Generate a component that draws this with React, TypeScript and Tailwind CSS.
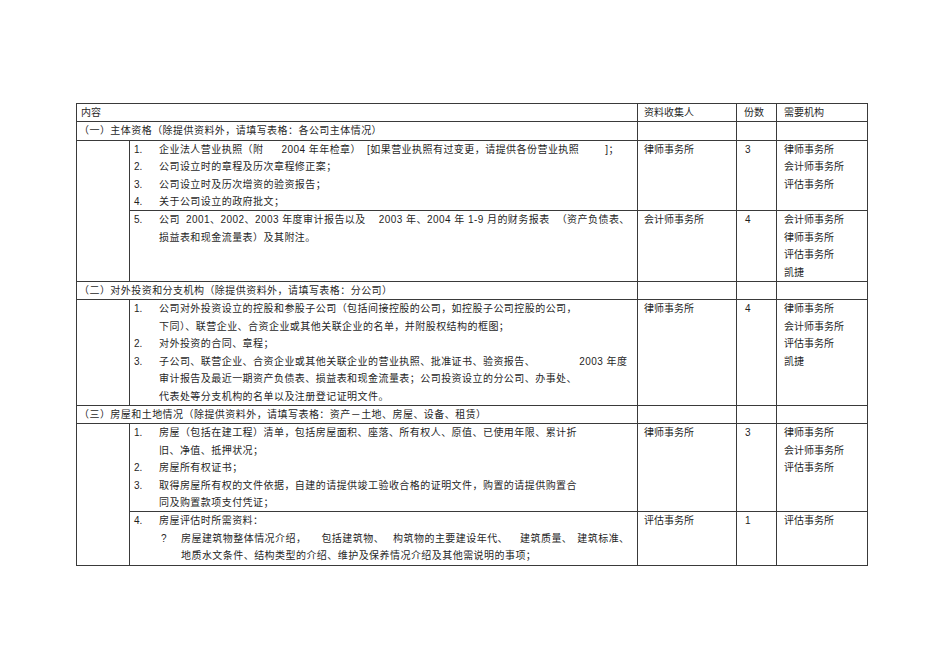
import type { ReactNode } from "react";

type Item = { no: string; lines: ReactNode[]; bullet?: { mark: string; lines: ReactNode[] } };
type Group = { items: Item[]; collector: string; count: string; orgs: string[] };
type Section = { title: string; groups: Group[] };

function Gap({ className }: { className: string }) {
  return <span className={className} />;
}

const sections: Section[] = [
  {
    title: "（一）主体资格（除提供资料外，请填写表格：各公司主体情况）",
    groups: [
      {
        items: [
          {
            no: "1.",
            lines: [
              <>
                企业法人营业执照（附
                <Gap className="inline-block w-[18px]" />
                2004 年年检章）
                <Gap className="inline-block w-[6px]" />
                [如果营业执照有过变更，请提供各份营业执照
                <Gap className="inline-block w-[26px]" />
                ]；
              </>,
            ],
          },
          { no: "2.", lines: ["公司设立时的章程及历次章程修正案；"] },
          { no: "3.", lines: ["公司设立时及历次增资的验资报告；"] },
          { no: "4.", lines: ["关于公司设立的政府批文；"] },
        ],
        collector: "律师事务所",
        count: "3",
        orgs: ["律师事务所", "会计师事务所", "评估事务所"],
      },
      {
        items: [
          {
            no: "5.",
            lines: [
              <>
                公司
                <Gap className="inline-block w-[6px]" />
                2001、2002、2003 年度审计报告以及
                <Gap className="inline-block w-[13px]" />
                2003 年、2004 年 1-9 月的财务报表
                <Gap className="inline-block w-[7px]" />
                （资产负债表、
              </>,
              "损益表和现金流量表）及其附注。",
            ],
          },
        ],
        collector: "会计师事务所",
        count: "4",
        orgs: ["会计师事务所", "律师事务所", "评估事务所", "凯捷"],
      },
    ],
  },
  {
    title: "（二）对外投资和分支机构（除提供资料外，请填写表格：分公司）",
    groups: [
      {
        items: [
          {
            no: "1.",
            lines: [
              "公司对外投资设立的控股和参股子公司（包括间接控股的公司，如控股子公司控股的公司，",
              "下同）、联营企业、合资企业或其他关联企业的名单，并附股权结构的框图；",
            ],
          },
          { no: "2.", lines: ["对外投资的合同、章程；"] },
          {
            no: "3.",
            lines: [
              <>
                子公司、联营企业、合资企业或其他关联企业的营业执照、批准证书、验资报告、
                <Gap className="inline-block w-[44px]" />
                2003 年度
              </>,
              "审计报告及最近一期资产负债表、损益表和现金流量表；公司投资设立的分公司、办事处、",
              "代表处等分支机构的名单以及注册登记证明文件。",
            ],
          },
        ],
        collector: "律师事务所",
        count: "4",
        orgs: ["律师事务所", "会计师事务所", "评估事务所", "凯捷"],
      },
    ],
  },
  {
    title: "（三）房屋和土地情况（除提供资料外，请填写表格：资产－土地、房屋、设备、租赁）",
    groups: [
      {
        items: [
          {
            no: "1.",
            lines: [
              "房屋（包括在建工程）清单，包括房屋面积、座落、所有权人、原值、已使用年限、累计折",
              "旧、净值、抵押状况；",
            ],
          },
          { no: "2.", lines: ["房屋所有权证书；"] },
          {
            no: "3.",
            lines: [
              "取得房屋所有权的文件依据，自建的请提供竣工验收合格的证明文件，购置的请提供购置合",
              "同及购置款项支付凭证；",
            ],
          },
        ],
        collector: "律师事务所",
        count: "3",
        orgs: ["律师事务所", "会计师事务所", "评估事务所"],
      },
      {
        items: [
          {
            no: "4.",
            lines: ["房屋评估时所需资料："],
            bullet: {
              mark: "?",
              lines: [
                <>
                  房屋建筑物整体情况介绍，
                  <Gap className="inline-block w-[15px]" />
                  包括建筑物、
                  <Gap className="inline-block w-[9px]" />
                  构筑物的主要建设年代、
                  <Gap className="inline-block w-[12px]" />
                  建筑质量、
                  <Gap className="inline-block w-[5px]" />
                  建筑标准、
                </>,
                "地质水文条件、结构类型的介绍、维护及保养情况介绍及其他需说明的事项；",
              ],
            },
          },
        ],
        collector: "评估事务所",
        count: "1",
        orgs: ["评估事务所"],
      },
    ],
  },
];

const cell = "border border-[#3a3a3a] align-top p-0";

function ItemRow({ item }: { item: Item }) {
  return (
    <div>
      <div className="flex">
        <span className="w-[25px] shrink-0 tracking-normal">{item.no}</span>
        <div>
          {item.lines.map((line, i) => (
            <div key={i} className="whitespace-nowrap">
              {line}
            </div>
          ))}
        </div>
      </div>
      {item.bullet ? (
        <div className="flex pl-[27px]">
          <span className="w-[20px] shrink-0 tracking-normal">{item.bullet.mark}</span>
          <div>
            {item.bullet.lines.map((line, i) => (
              <div key={i} className="whitespace-nowrap">
                {line}
              </div>
            ))}
          </div>
        </div>
      ) : null}
    </div>
  );
}

export default function App() {
  return (
    <div
      lang="zh-CN"
      className="min-h-[672px] bg-white pt-[103px] pl-[76px] text-[10px] leading-[17.4px] text-[#1f1f1f]"
      style={{ fontFamily: '"Liberation Sans", "Noto Sans CJK SC", sans-serif' }}
    >
      <table className="w-[791px] table-fixed border-collapse">
        <colgroup>
          <col className="w-[53px]" />
          <col className="w-[508px]" />
          <col className="w-[99px]" />
          <col className="w-[40px]" />
          <col className="w-[91px]" />
        </colgroup>
        <tbody>
          <tr>
            <td colSpan={2} className={`${cell} pl-[4px]`}>
              内容
            </td>
            <td className={`${cell} pl-[6px]`}>资料收集人</td>
            <td className={`${cell} pl-[7px]`}>份数</td>
            <td className={`${cell} pl-[7px]`}>需要机构</td>
          </tr>
          {sections.map((section) => (
            <SectionRows key={section.title} section={section} />
          ))}
        </tbody>
      </table>
    </div>
  );
}

function SectionRows({ section }: { section: Section }) {
  return (
    <>
      <tr>
        <td colSpan={2} className={`${cell} pl-[2px] whitespace-nowrap tracking-[0.45px]`}>
          {section.title}
        </td>
        <td className={cell} />
        <td className={cell} />
        <td className={cell} />
      </tr>
      {section.groups.map((group, gi) => (
        <tr key={gi}>
          {gi === 0 ? <td rowSpan={section.groups.length} className={cell} /> : null}
          <td className={`${cell} pl-[4px] tracking-[0.45px]`}>
            {group.items.map((item) => (
              <ItemRow key={item.no} item={item} />
            ))}
          </td>
          <td className={`${cell} pl-[6px]`}>{group.collector}</td>
          <td className={`${cell} pl-[8px]`}>{group.count}</td>
          <td className={`${cell} pl-[7px]`}>
            {group.orgs.map((org) => (
              <div key={org}>{org}</div>
            ))}
          </td>
        </tr>
      ))}
    </>
  );
}
